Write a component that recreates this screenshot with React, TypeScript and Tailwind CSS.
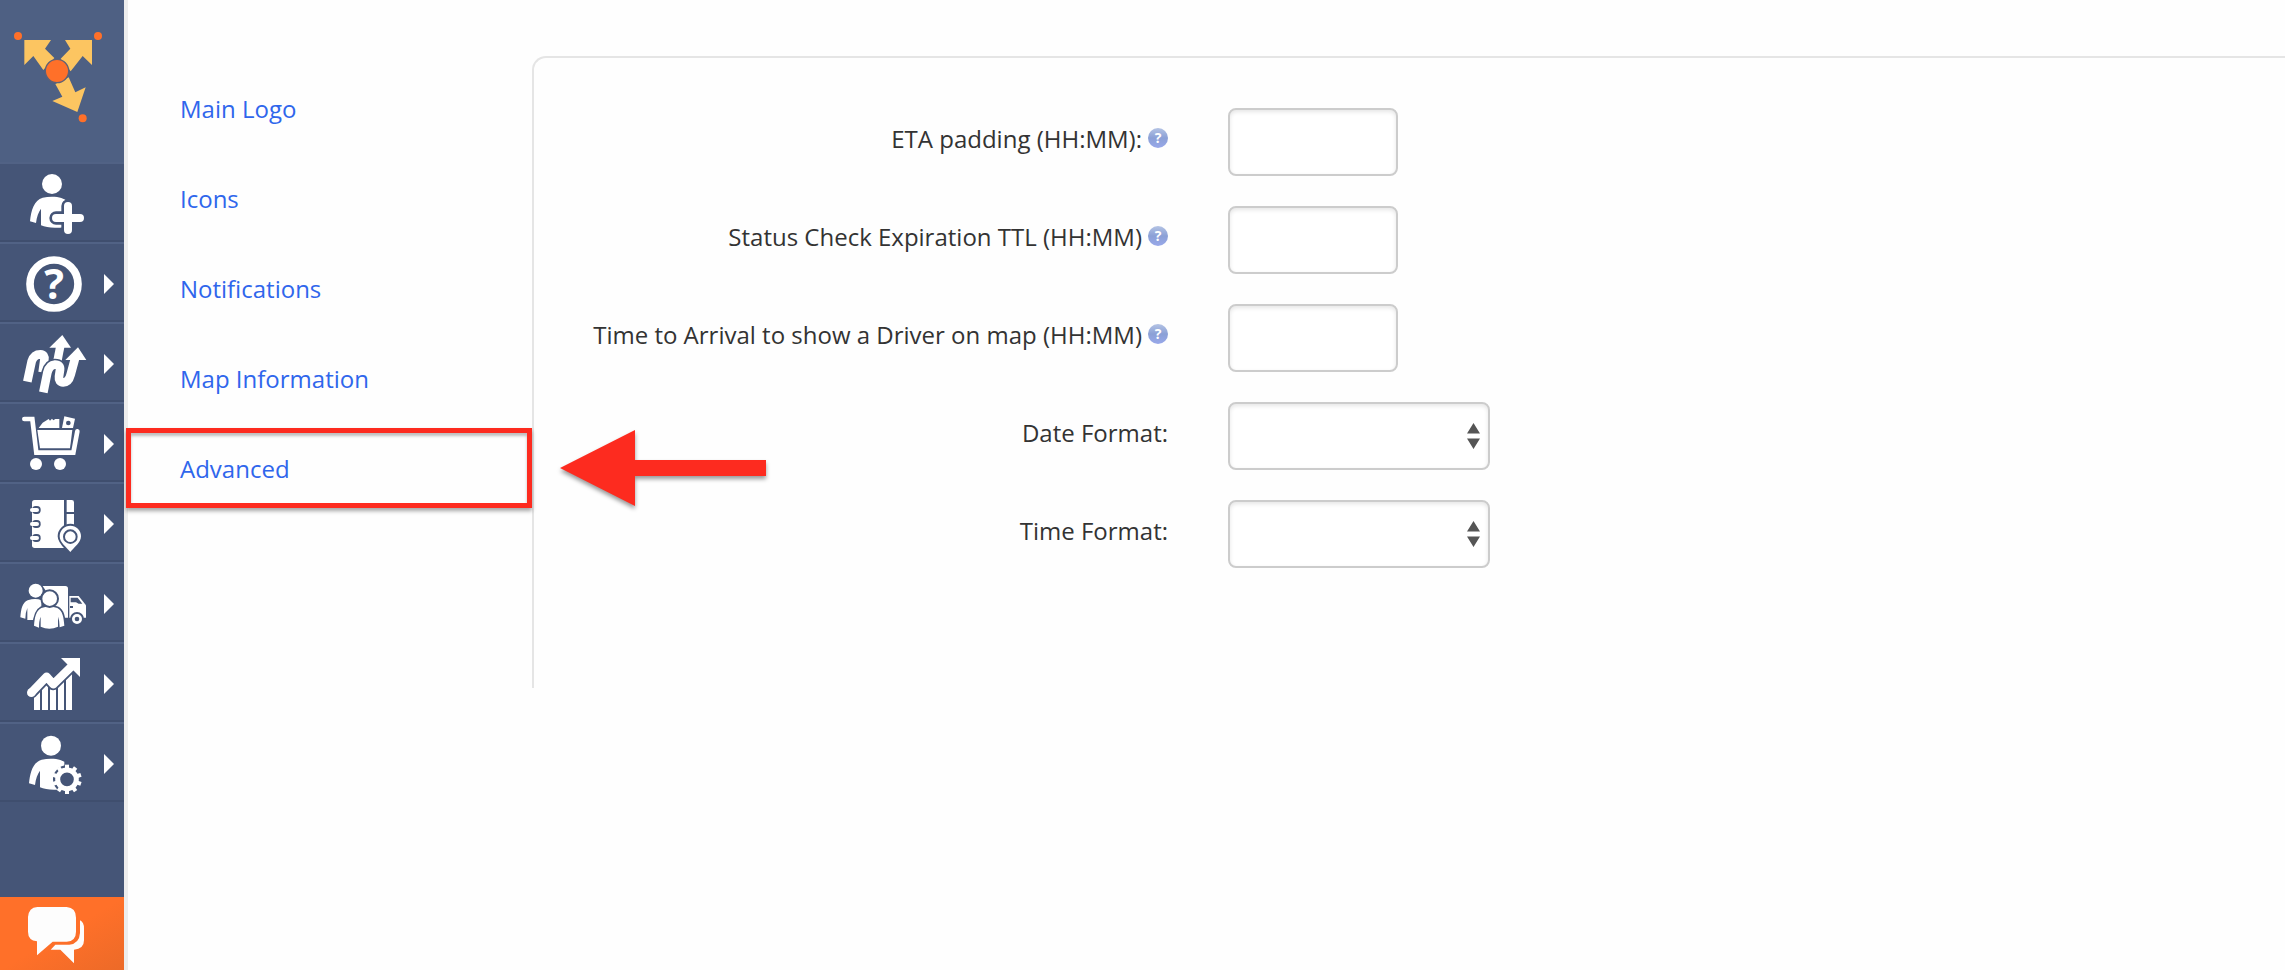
import type { ReactNode } from 'react';

const BODY =
  'M90 172 C93 140 102 108 128 101 C146 97 170 97 184 102 L196 107 L196 188 C170 194 140 192 123 184 L123 134 C116 144 110 158 108 177 Z';

interface IconProps {
  children: ReactNode;
}

function Icon({ children }: IconProps) {
  return (
    <svg viewBox="0 0 270 228" className="h-[76px] w-[90px] shrink-0" fill="#fff" aria-hidden="true">
      {children}
    </svg>
  );
}

function AddUserIcon() {
  return (
    <Icon>
      <circle cx="156" cy="60" r="30" />
      <path d={BODY} />
      <path d="M204 126V198M168 162H240" stroke="#455577" strokeWidth="40" strokeLinecap="round" />
      <path d="M204 126V198M168 162H240" stroke="#fff" strokeWidth="24" strokeLinecap="round" />
    </Icon>
  );
}

function HelpIcon() {
  return (
    <Icon>
      <circle cx="162" cy="120" r="72" fill="none" stroke="#fff" strokeWidth="23" />
      <text x="162" y="165" textAnchor="middle" fontSize="124" fontWeight="700" fontFamily="Open Sans, sans-serif">
        ?
      </text>
    </Icon>
  );
}

function RoutesIcon() {
  const front = 'M130 205L142 146Q148 123 165 122Q182 122 180 138L177 158Q175 174 190 175Q206 175 212 152L225 104';
  return (
    <Icon>
      <path d="M82 173L95 112Q102 91 121 91Q136 92 133 108L128 145" fill="none" stroke="#fff" strokeWidth="26" />
      <path d="M172 112L181 66" stroke="#fff" strokeWidth="25" />
      <path d="M187 33L148 71H213Z" />
      <path d={front} fill="none" stroke="#455577" strokeWidth="36" />
      <path d="M234 64L188 112H266Z" fill="#455577" />
      <path d={front} fill="none" stroke="#fff" strokeWidth="26" />
      <path d="M234 70L196 108H259Z" />
    </Icon>
  );
}

function CartIcon() {
  return (
    <Icon>
      <path
        d="M73 45H97L109 146H220L232 82"
        fill="none"
        stroke="#fff"
        strokeWidth="14"
        strokeLinecap="round"
      />
      <path d="M112 78H217L210 133H120Z" />
      <path d="M116 72L128 56L146 45L150 50L156 44L160 49L166 45H178V72Z" />
      <path d="M193 37L225 44L219 72H186Z" />
      <circle cx="205" cy="57" r="7" fill="#455577" />
      <circle cx="108" cy="180" r="18" />
      <circle cx="180" cy="180" r="18" />
    </Icon>
  );
}

function AddressBookIcon() {
  const pin = 'M211 204C200 190 179 176 179 157A32 32 0 0 1 243 157C243 176 222 190 211 204Z';
  return (
    <Icon>
      <path d="M104 48H192V192H104Q96 192 96 184V56Q96 48 104 48Z" />
      <path d="M200 48H215Q222 48 222 55V84H200ZM200 90H222V140H200Z" />
      {[78, 120, 162].map((y) => (
        <g key={y}>
          <rect x="96" y={y - 12} width="26" height="24" rx="11" fill="#455577" />
          <rect x="90" y={y - 6} width="27" height="12" rx="6" />
        </g>
      ))}
      <path d={pin} stroke="#455577" strokeWidth="12" />
      <path d={pin} />
      <circle cx="211" cy="158" r="19" stroke="#455577" strokeWidth="6" />
    </Icon>
  );
}

function TeamIcon() {
  const front = 'M102 185C104 160 108 140 124 132Q148 124 172 132C188 140 191 160 193 185L179 190Q179 170 174 158V188Q148 200 122 188V158Q117 170 117 191Z';
  return (
    <Icon>
      <path d="M128 66H196Q204 66 204 74V161H150V100Z" />
      <path d="M208 96H236L258 124V161H208Z" />
      <path d="M212 101H233L247 119H236L228 115H212ZM210 126H219V132H210Z" fill="#455577" />
      <path d="M61 160C63 135 67 116 83 109Q107 101 124 109V168H82V132Q76 146 76 164Z" />
      <circle cx="107" cy="80" r="21" />
      <path d={front} stroke="#455577" strokeWidth="10" />
      <path d={front} />
      <circle cx="149" cy="104" r="25" stroke="#455577" strokeWidth="6" />
      <circle cx="231" cy="165" r="18" stroke="#455577" strokeWidth="6" />
      <circle cx="231" cy="165" r="7" fill="#455577" />
    </Icon>
  );
}

function AnalyticsIcon() {
  const line = 'M94 146L140 98L160 121L222 60';
  return (
    <Icon>
      <path d="M102 140H120V198H102ZM126 120H144V198H126ZM150 125H168V198H150ZM174 110H192V198H174ZM198 85H216V198H198Z" />
      <path d={line} fill="none" stroke="#455577" strokeWidth="36" strokeLinecap="round" strokeLinejoin="round" />
      <path d={line} fill="none" stroke="#fff" strokeWidth="25" strokeLinejoin="round" />
      <circle cx="94" cy="146" r="13" />
      <path d="M183 42H240V99Z" />
    </Icon>
  );
}

function UserSettingsIcon() {
  const teeth = [0, 36, 72, 108, 144, 180, 216, 252, 288, 324];
  return (
    <Icon>
      <circle cx="153" cy="65" r="30" />
      <path d={BODY} transform="translate(-3 6)" />
      <circle cx="201" cy="166" r="42" fill="#455577" />
      <g stroke="#fff" fill="none">
        <circle cx="201" cy="166" r="28" strokeWidth="15" />
        {teeth.map((a) => (
          <path key={a} d="M201 136V122" strokeWidth="12" transform={`rotate(${a} 201 166)`} />
        ))}
      </g>
    </Icon>
  );
}

function Logo() {
  return (
    <svg viewBox="0 0 372 486" className="h-[162px] w-[124px]" aria-hidden="true">
      <g fill="#fcc561">
        <path d="M73 120H153L135 146L163 174L130 210L100 168L73 195Z" />
        <path d="M276 120H195L211 146L182 176L212 214L248 168L276 195Z" />
        <path d="M166 252L206 232L226 277L257 262L232 336L157 303L187 290Z" />
      </g>
      <circle cx="171" cy="213" r="35" fill="#ff7029" stroke="#5d6076" strokeWidth="4" />
      <g fill="#ff7029">
        <circle cx="54" cy="108" r="12" />
        <circle cx="294" cy="108" r="12" />
        <circle cx="248" cy="355" r="12" />
      </g>
    </svg>
  );
}

const menu = [
  { label: 'Add user', icon: <AddUserIcon />, nested: false },
  { label: 'Help', icon: <HelpIcon />, nested: true },
  { label: 'Routes', icon: <RoutesIcon />, nested: true },
  { label: 'Orders', icon: <CartIcon />, nested: true },
  { label: 'Address book', icon: <AddressBookIcon />, nested: true },
  { label: 'Team', icon: <TeamIcon />, nested: true },
  { label: 'Analytics', icon: <AnalyticsIcon />, nested: true },
  { label: 'Account settings', icon: <UserSettingsIcon />, nested: true },
];

function Sidebar() {
  return (
    <aside className="flex w-32 shrink-0 flex-col border-r-4 border-[#ededed] bg-[#455577]">
      <a href="#home" aria-label="Home" className="block bg-[#4e6083]">
        <Logo />
      </a>
      <nav className="flex flex-col">
        {menu.map((item) => (
          <a
            key={item.label}
            href="#menu"
            aria-label={item.label}
            className="flex h-20 items-center border-t-2 border-b-2 border-t-[#516285] border-b-[#3f4e6e]"
          >
            {item.icon}
            {item.nested && (
              <svg viewBox="0 0 10 20" className="mt-1 ml-3.5 h-5 w-2.5" fill="#fff" aria-hidden="true">
                <path d="M0 0L10 10L0 20Z" />
              </svg>
            )}
          </a>
        ))}
      </nav>
      <button
        type="button"
        aria-label="Chat"
        className="mt-auto h-[73px] bg-linear-to-br from-[#ff7029] from-50% to-[#ec6a28]"
      >
        <svg viewBox="0 0 372 219" className="h-[73px] w-[124px]" fill="#fdfdfd" aria-hidden="true">
          <path d="M112 30H200Q228 32 228 62V104Q228 132 200 134H158L111 175V133Q84 130 84 104V60Q86 32 112 30Z" />
          <path d="M240 70Q252 76 252 94V130Q252 156 222 158V199L181 158H152L166 143H208Q238 140 240 108Z" />
        </svg>
      </button>
    </aside>
  );
}

const sections = ['Main Logo', 'Icons', 'Notifications', 'Map Information', 'Advanced'];

function SectionNav() {
  return (
    <nav className="w-[404px] shrink-0 pt-16">
      {sections.map((name) => (
        <div key={name} className="relative flex h-[90px] items-center pl-[52px]">
          <a href="#section" className="text-[#2f66ec]">
            {name}
          </a>
          {name === 'Advanced' && (
            <>
              <div className="pointer-events-none absolute top-1 right-0 -left-0.5 h-20 border-5 border-[#fd2b1f] shadow-[0_3px_4px_rgba(0,0,0,0.35),inset_0_3px_3px_rgba(0,0,0,0.25)]" />
              <svg
                viewBox="0 0 206 76"
                className="pointer-events-none absolute top-1.5 left-full ml-7 h-[76px] w-[206px] overflow-visible drop-shadow-[0_3px_2px_rgba(0,0,0,0.4)]"
                fill="#fd2b1f"
                aria-hidden="true"
              >
                <path d="M0 38L75 0V30H206V46H75V76Z" />
              </svg>
            </>
          )}
        </div>
      ))}
    </nav>
  );
}

function HelpBadge() {
  return (
    <span className="flex h-5 w-5 items-center justify-center rounded-full bg-linear-to-b from-[#b4c3e4] via-[#8ba0d6] to-[#98a8ea] text-sm leading-5 font-bold text-white">
      ?
    </span>
  );
}

interface FieldProps {
  id: string;
  label: string;
  help?: boolean;
  children: ReactNode;
}

function Field({ id, label, help, children }: FieldProps) {
  return (
    <div className="grid grid-cols-[634px_1fr] gap-x-[60px]">
      <div className="flex items-start justify-end gap-1.5 pt-[13px]">
        <label htmlFor={id}>{label}</label>
        {help && (
          <span className="pt-[7px]">
            <HelpBadge />
          </span>
        )}
      </div>
      <div>{children}</div>
    </div>
  );
}

const control =
  'block h-[68px] rounded-lg border-2 border-[#ccc] bg-white px-4 shadow-[inset_0_2px_4px_rgba(0,0,0,0.1)] outline-none';

function TimeInput({ id }: { id: string }) {
  return <input id={id} type="text" className={`${control} w-[170px]`} />;
}

function FormatSelect({ id }: { id: string }) {
  return (
    <div className="relative w-[262px]">
      <select id={id} className={`${control} w-full appearance-none`} />
      <svg
        viewBox="0 0 26 52"
        className="pointer-events-none absolute top-[21px] right-2.5 h-[26px] w-[13px]"
        fill="#555"
        aria-hidden="true"
      >
        <path d="M13 0L26 21H0ZM0 31H26L13 52Z" />
      </svg>
    </div>
  );
}

export default function App() {
  return (
    <div className="flex min-h-screen bg-[#fefefe] font-['Open_Sans',sans-serif] text-2xl leading-9 text-[#333]">
      <Sidebar />
      <SectionNav />
      <main className="min-w-0 flex-1 pt-14">
        <form className="flex flex-col gap-[30px] rounded-tl-[14px] border-t-2 border-l-2 border-[#e5e5e5] pt-[50px] pb-[120px]">
          <Field id="eta" label="ETA padding (HH:MM):" help>
            <TimeInput id="eta" />
          </Field>
          <Field id="ttl" label="Status Check Expiration TTL (HH:MM)" help>
            <TimeInput id="ttl" />
          </Field>
          <Field id="arrival" label="Time to Arrival to show a Driver on map (HH:MM)" help>
            <TimeInput id="arrival" />
          </Field>
          <Field id="date" label="Date Format:">
            <FormatSelect id="date" />
          </Field>
          <Field id="time" label="Time Format:">
            <FormatSelect id="time" />
          </Field>
        </form>
      </main>
    </div>
  );
}
